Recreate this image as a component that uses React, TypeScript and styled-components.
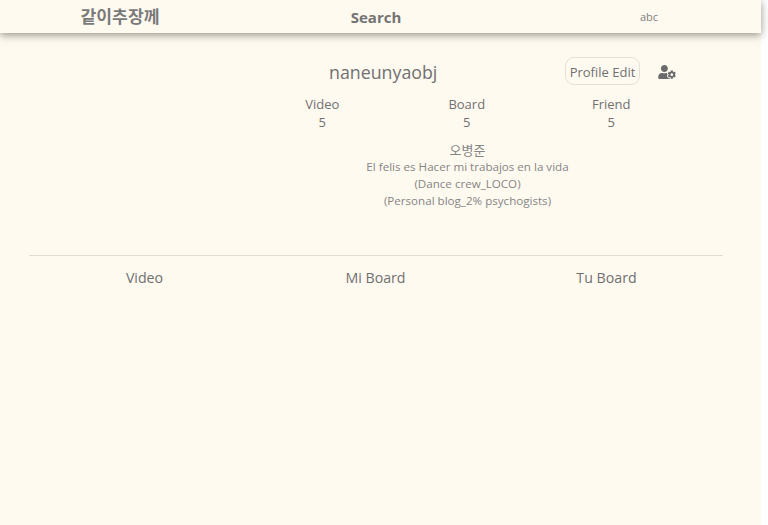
import React from 'react';
import styled, { createGlobalStyle } from 'styled-components';
import { FaUserCog } from 'react-icons/fa';

const GlobalStyle = createGlobalStyle`
  html, body {
    margin: 0;
    padding: 0;
    background: #ffffff;
  }
  body {
    font-family: "Open Sans", "Noto Sans CJK KR", sans-serif;
    overflow: hidden;
  }
`;

const Page = styled.div`
  width: 761px;
  height: 525px;
  background: floralwhite;
  color: #6b6b6b;
`;

const NavBar = styled.header`
  display: grid;
  grid-template-columns: 240px 272px 1fr;
  align-items: center;
  height: 33px;
  background: floralwhite;
  box-shadow: 0 2px 8px rgba(60, 55, 40, 0.55);
`;

const Logo = styled.div`
  margin-bottom: 3px;
  text-align: center;
  font-family: "Noto Sans CJK KR", sans-serif;
  font-size: 17.2px;
  font-weight: 700;
  color: #7a7a7a;
`;

const SearchLink = styled.div`
  text-align: center;
  font-size: 15px;
  font-weight: 700;
  color: #737373;
`;

const UserName = styled.div`
  margin-bottom: 1px;
  text-align: center;
  padding-left: 25px;
  font-size: 11px;
  color: #808080;
`;

const Profile = styled.section`
  display: flex;
  flex-direction: column;
  margin: 24px 38px 0 202px;
`;

const ProfileTop = styled.div`
  display: flex;
  align-items: center;
  height: 28px;
`;

const Nickname = styled.h1`
  margin: 0 0 0 127px;
  padding-top: 1px;
  width: 236px;
  font-size: 17.8px;
  font-weight: 400;
  color: #707070;
`;

const EditButton = styled.button`
  width: 75px;
  height: 28px;
  padding: 1px 0 0;
  border: 1px solid #e3e0d8;
  border-radius: 9px;
  background: transparent;
  font-family: inherit;
  font-size: 13px;
  color: #707070;
`;

const SettingsIcon = styled(FaUserCog)`
  width: 18px;
  height: 14px;
  margin: 1px 0 0 18px;
  color: #6b6b6b;
`;

const Stats = styled.div`
  display: grid;
  grid-template-columns: repeat(3, 144.5px);
  margin-top: 10px;
  margin-left: 48px;
`;

const Stat = styled.div`
  text-align: center;
  font-size: 13px;
  line-height: 18px;
  color: #707070;
`;

const Bio = styled.div`
  margin: 10px 0 0 0;
  padding-left: 10px;
  text-align: center;
  font-size: 11.6px;
  line-height: 17px;
  color: #858585;
`;

const BioName = styled.div`
  font-family: "Noto Sans CJK KR", sans-serif;
  font-size: 13px;
`;

const Divider = styled.hr`
  margin: 46px 38px 0 29px;
  border: 0;
  border-top: 1px solid #e0ddd3;
`;

const Tabs = styled.nav`
  display: grid;
  grid-template-columns: repeat(3, 231px);
  margin: 0 38px 0 29px;
`;

const Tab = styled.div`
  padding-top: 12px;
  text-align: center;
  font-size: 14.2px;
  line-height: 20px;
  color: #707070;
`;

const stats = ['Video', 'Board', 'Friend'];
const bioLines = [
  'El felis es Hacer mi trabajos en la vida',
  '(Dance crew_LOCO)',
  '(Personal blog_2% psychogists)',
];
const tabs = ['Video', 'Mi Board', 'Tu Board'];

const App: React.FC = () => {
  return (
    <Page>
      <GlobalStyle />
      <NavBar>
        <Logo>같이추장께</Logo>
        <SearchLink>Search</SearchLink>
        <UserName>abc</UserName>
      </NavBar>
      <Profile>
        <ProfileTop>
          <Nickname>naneunyaobj</Nickname>
          <EditButton>Profile Edit</EditButton>
          <SettingsIcon />
        </ProfileTop>
        <Stats>
          {stats.map((label) => (
            <Stat key={label}>
              {label}
              <br />5
            </Stat>
          ))}
        </Stats>
        <Bio>
          <BioName>오병준</BioName>
          {bioLines.map((line) => (
            <div key={line}>{line}</div>
          ))}
        </Bio>
      </Profile>
      <Divider />
      <Tabs>
        {tabs.map((tab) => (
          <Tab key={tab}>{tab}</Tab>
        ))}
      </Tabs>
    </Page>
  );
};

export default App;
